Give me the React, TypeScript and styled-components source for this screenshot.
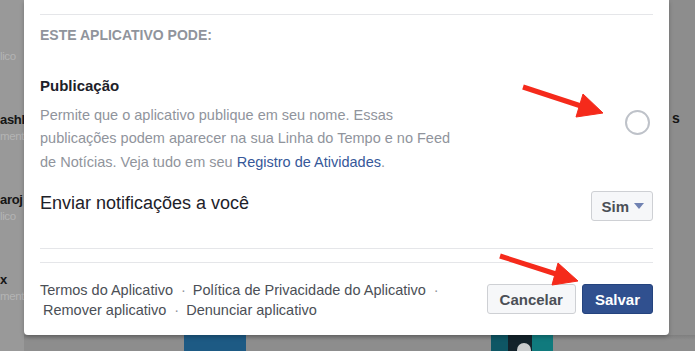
import styled, { createGlobalStyle } from "styled-components";

const GlobalStyle = createGlobalStyle`
    html, body {
        margin: 0;
        padding: 0;
        overflow: hidden;
    }
    body {
        font-family: "Liberation Sans", Helvetica, Arial, sans-serif;
    }
`;

const Page = styled.div`
    position: relative;
    width: 695px;
    height: 351px;
    overflow: hidden;
    background: #8d8d8d;
    display: grid;
    grid-template-columns: 24px 645px 1fr;
    grid-template-rows: 335px 1fr;
`;

// the page behind the dialog, mostly hidden
const LeftStrip = styled.div`
    grid-row: 1 / 3;
    grid-column: 1;
    background: #999999;
    overflow: hidden;
    padding-top: 20px;
    display: flex;
    flex-direction: column;
`;

const BgItem = styled.div`
    height: 80px;
    padding-top: 12px;
    box-sizing: border-box;
    white-space: nowrap;
    overflow: hidden;
`;

const BgTitle = styled.div`
    font-size: 13px;
    font-weight: bold;
    line-height: 16px;
    color: #151515;
    letter-spacing: -0.3px;
`;

const BgSub = styled.div`
    font-size: 11.5px;
    line-height: 16px;
    color: #b4b4b4;
    letter-spacing: -0.4px;
`;

const RightStrip = styled.div`
    grid-row: 1;
    grid-column: 3;
    padding: 110px 0 0 3px;
    font-size: 14px;
    font-weight: bold;
    color: #151515;
`;

const BottomStrip = styled.div`
    grid-row: 2;
    grid-column: 2 / 4;
    display: flex;
    background: linear-gradient(#7f7f7f, #8d8d8d 5px);
`;

const Thumb = styled.div`
    width: 62px;
    margin-left: 160px;
    background: #1d5a84;
`;

const Modal = styled.div`
    grid-row: 1;
    grid-column: 2;
    background: #ffffff;
    border-radius: 0 0 4px 4px;
    box-shadow: 0 2px 4px rgba(0, 0, 0, 0.25);
    padding: 14px 16px 15px;
    display: flex;
    flex-direction: column;
    position: relative;
    z-index: 1;
`;

const Divider = styled.div<{ $gap: number }>`
    height: 1px;
    margin-top: ${(p) => p.$gap}px;
    background: #e5e6e9;
`;

const SectionTitle = styled.div`
    margin-top: 11px;
    font-size: 14px;
    font-weight: bold;
    line-height: 18px;
    color: #90949c;
    text-transform: uppercase;
`;

const PermissionRow = styled.div`
    margin-top: 32px;
    display: flex;
    align-items: center;
    justify-content: space-between;
`;

const PermTitle = styled.div`
    font-size: 15px;
    font-weight: bold;
    line-height: 20px;
    color: #1d2129;
`;

const PermDesc = styled.div`
    margin-top: 8px;
    font-size: 14.5px;
    line-height: 23.5px;
    color: #90949c;
    white-space: nowrap;
    a {
        color: #365899;
        text-decoration: none;
    }
`;

const Radio = styled.div`
    width: 25px;
    height: 25px;
    box-sizing: border-box;
    border: 2.5px solid #bec2c9;
    border-radius: 50%;
    margin: 0 3px 6px 0;
`;

const NotifyRow = styled.div`
    margin-top: 17px;
    height: 30px;
    display: flex;
    align-items: flex-start;
    justify-content: space-between;
`;

const NotifyLabel = styled.div`
    font-size: 18px;
    font-weight: 500;
    line-height: 24px;
    color: #1d2129;
`;

const Button = styled.button<{ $primary?: boolean }>`
    height: 30px;
    box-sizing: border-box;
    padding: 0 12px;
    border-radius: 3px;
    border: 1px solid ${(p) => (p.$primary ? "#24437e" : "#ced0d4")};
    background: ${(p) => (p.$primary ? "#30508f" : "#f6f7f9")};
    color: ${(p) => (p.$primary ? "#ffffff" : "#4b4f56")};
    font-family: inherit;
    font-size: 15px;
    font-weight: bold;
    display: flex;
    align-items: center;
    gap: 6px;
    cursor: pointer;
`;

const SelectButton = styled(Button)`
    padding: 0 8px 0 9px;
    gap: 5px;
`;

const Caret = styled.span`
    width: 0;
    height: 0;
    border-left: 5.5px solid transparent;
    border-right: 5.5px solid transparent;
    border-top: 6px solid #7082b2;
`;

const Footer = styled.div`
    margin-top: 17px;
    display: flex;
    align-items: center;
    justify-content: space-between;
`;

const Links = styled.div`
    font-size: 14.5px;
    line-height: 20px;
    color: #4b4f56;
    white-space: nowrap;
`;

const LinkLine = styled.div<{ $indent?: number }>`
    padding-left: ${(p) => p.$indent || 0}px;
`;

const Dot = styled.span`
    margin: 0 7px 0 8px;
    color: #90949c;
`;

const Actions = styled.div`
    display: flex;
    gap: 6px;
    margin-bottom: 1px;
`;

const Annotations = styled.svg`
    position: absolute;
    inset: 0;
    z-index: 2;
    pointer-events: none;
`;

const bgItems = [
    { title: "", sub: "lico" },
    { title: "ashl", sub: "ment" },
    { title: "aroj", sub: "lico" },
    { title: "x", sub: "ment" },
];

function Arrow({ tail, mid, tip, a, b }: { tail: number[]; mid: number[]; tip: number[]; a: number[]; b: number[] }) {
    return (
        <g fill="#f52a1b" stroke="#f52a1b">
            <line x1={tail[0]} y1={tail[1]} x2={mid[0]} y2={mid[1]} strokeWidth={5} />
            <polygon points={`${tip.join(",")} ${a.join(",")} ${b.join(",")}`} strokeWidth={1} strokeLinejoin="round" />
        </g>
    );
}

export default function App() {
    return (
        <>
            <GlobalStyle />
            <Page>
                <LeftStrip>
                    {bgItems.map((item, i) => (
                        <BgItem key={i}>
                            <BgTitle>{item.title || "\u00a0"}</BgTitle>
                            <BgSub>{item.sub}</BgSub>
                        </BgItem>
                    ))}
                </LeftStrip>

                <Modal>
                    <Divider $gap={0} />
                    <SectionTitle>Este aplicativo pode:</SectionTitle>
                    <PermissionRow>
                        <div>
                            <PermTitle>Publicação</PermTitle>
                            <PermDesc>
                                Permite que o aplicativo publique em seu nome. Essas
                                <br />
                                publicações podem aparecer na sua Linha do Tempo e no Feed
                                <br />
                                de Notícias. Veja tudo em seu <a href="#">Registro de Atividades</a>.
                            </PermDesc>
                        </div>
                        <Radio />
                    </PermissionRow>
                    <NotifyRow>
                        <NotifyLabel>Enviar notificações a você</NotifyLabel>
                        <SelectButton>
                            Sim
                            <Caret />
                        </SelectButton>
                    </NotifyRow>
                    <Divider $gap={27} />
                    <Divider $gap={13} />
                    <Footer>
                        <Links>
                            <LinkLine>
                                Termos do Aplicativo<Dot>·</Dot>Política de Privacidade do Aplicativo<Dot>·</Dot>
                            </LinkLine>
                            <LinkLine $indent={3}>
                                Remover aplicativo<Dot>·</Dot>Denunciar aplicativo
                            </LinkLine>
                        </Links>
                        <Actions>
                            <Button>Cancelar</Button>
                            <Button $primary>Salvar</Button>
                        </Actions>
                    </Footer>
                </Modal>

                <RightStrip>s</RightStrip>

                <BottomStrip>
                    <Thumb />
                    <svg width="62" height="16" viewBox="0 0 62 16" style={{ marginLeft: 245 }}>
                        <rect x="0" y="0" width="17" height="16" fill="#0e5664" />
                        <rect x="17" y="0" width="24" height="16" fill="#13232b" />
                        <rect x="41" y="0" width="21" height="16" fill="#107a7d" />
                        <circle cx="33" cy="15" r="7" fill="#c9cccd" />
                    </svg>
                </BottomStrip>

                <Annotations width="695" height="351" viewBox="0 0 695 351">
                    <Arrow tail={[523, 87]} mid={[581, 106]} tip={[603, 113]} a={[583, 94]} b={[576, 117]} />
                    <Arrow tail={[500, 256]} mid={[556, 274]} tip={[578, 281]} a={[558, 263]} b={[552, 285]} />
                </Annotations>
            </Page>
        </>
    );
}
